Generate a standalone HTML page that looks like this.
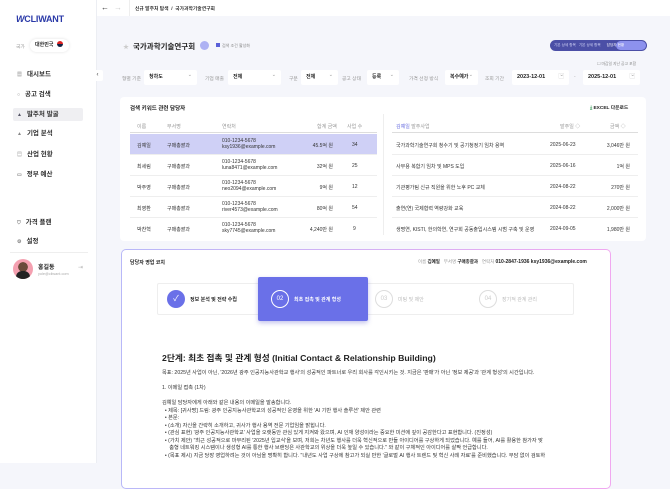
<!DOCTYPE html>
<html><head><meta charset="utf-8"><style>
*{box-sizing:border-box;margin:0;padding:0}
body{width:670px;height:463px;overflow:hidden;background:#f5f6fb;font-family:"Liberation Sans","Noto Sans CJK KR",sans-serif;color:#222;position:relative}
.abs{position:absolute}
.side{left:0;top:0;width:97px;height:463px;background:#fff;border-right:1px solid #eceef3}
.nav{left:13px;font-size:6.5px;font-weight:bold;color:#333;height:13px;width:70px;line-height:13px;padding-left:4px}
.nav i{font-style:normal;color:#888;font-size:5px;margin-right:5px}
.top{left:97px;top:0;width:573px;height:16px;background:#fff}
.lbl{font-size:4.8px;color:#999}
.sel{background:#fff;border-radius:2px;height:15px;font-size:5px;font-weight:bold;line-height:15px;padding-left:5px;color:#222}
.sel:after{content:"⌄";position:absolute;right:5px;top:-2px;color:#999;font-weight:normal}
.card{background:#fff;border-radius:4px}
.tx{font-size:5px;color:#333;white-space:nowrap}
.row{left:130px;width:247px;height:21px;border-bottom:1px solid #eee}
.rrow{left:392px;width:246px;height:21px;border-bottom:1px solid #eee}
.c{position:absolute;font-size:5px;color:#333;white-space:nowrap}
.p{font-size:5.2px;color:#333;line-height:7.5px;white-space:nowrap}
</style></head><body>
<div class="abs side"></div>
<div class="abs" style="left:16px;top:14px;font-size:9px;font-weight:bold;color:#2b3aa8;letter-spacing:-0.2px"><span style="font-style:italic;color:#2b3aa8">W</span>CLIWANT</div>
<div class="abs lbl" style="left:16px;top:43px">국가</div>
<div class="abs" style="left:30px;top:39px;width:39px;height:13px;background:#fff;border-radius:7px;box-shadow:0 0 3px rgba(0,0,0,.12);font-size:5px;font-weight:bold;line-height:13px;padding-left:5px">대한민국 <span style="display:inline-block;width:6px;height:6px;border-radius:50%;background:linear-gradient(#d22 50%,#124 50%);vertical-align:-1px;margin-left:2px"></span></div>
<div class="abs nav" style="top:68px"><i>▦</i>대시보드</div>
<div class="abs nav" style="top:88px"><i>○</i>공고 검색</div>
<div class="abs nav" style="top:108px;background:#efeff2;border-radius:2px"><i style="color:#556">▲</i>발주처 발굴</div>
<div class="abs nav" style="top:127px"><i>▲</i>기업 분석</div>
<div class="abs nav" style="top:148px"><i>▤</i>산업 현황</div>
<div class="abs nav" style="top:168px"><i>▭</i>정부 예산</div>
<div class="abs nav" style="top:216px"><i>⛉</i>가격 플랜</div>
<div class="abs nav" style="top:235px"><i>⚙</i>설정</div>
<div class="abs" style="left:10px;top:252px;width:78px;border-top:1px solid #eee"></div>
<div class="abs" style="left:13px;top:259px;width:20px;height:20px;border-radius:50%;background:radial-gradient(circle at 50% 40%,#6a4a3a 30%,#f4a0b0 32%);overflow:hidden"><div style="position:absolute;left:3px;top:12px;width:14px;height:10px;border-radius:6px 6px 0 0;background:#222"></div></div>
<div class="abs" style="left:38px;top:262px;font-size:6px;font-weight:bold">홍길동</div>
<div class="abs" style="left:38px;top:272px;font-size:3.8px;color:#aaa">yole@cliwant.com</div>
<div class="abs" style="left:78px;top:264px;font-size:6px;color:#bbb">⇥</div>
<div class="abs top"></div>
<div class="abs" style="left:101px;top:3px;font-size:8px;color:#333">←</div><div class="abs" style="left:114px;top:3px;font-size:8px;color:#ccc">→</div>
<div class="abs" style="left:129px;top:0;height:16px;border-left:1px solid #eee"></div>
<div class="abs tx" style="left:135px;top:5px;font-size:4.8px;font-weight:bold">신규 발주처 탐색 &nbsp;/&nbsp; 국가과학기술연구회</div>
<div class="abs" style="left:92px;top:70px;width:11px;height:11px;background:#fff;border-radius:2px;font-size:6px;text-align:center;line-height:11px;color:#444">‹</div>
<div class="abs" style="left:123px;top:42px;font-size:6px;color:#ccc">★</div>
<div class="abs" style="left:133px;top:41px;font-size:7.5px;font-weight:bold;white-space:nowrap">국가과학기술연구회</div>
<div class="abs" style="left:200px;top:41px;width:9px;height:9px;border-radius:50%;background:#aeb2f3"></div>
<div class="abs" style="left:216px;top:43px;font-size:4px;color:#888;white-space:nowrap"><span style="display:inline-block;width:4px;height:4px;background:#5a60d8;margin-right:2px"></span>검색 조건 활성화</div>
<div class="abs" style="left:550px;top:40px;width:97px;height:11px;border-radius:6px;background:#4b4fa6"></div>
<div class="abs" style="left:616px;top:41px;width:30px;height:9px;border-radius:5px;background:#8d92ee"></div>
<div class="abs" style="left:554px;top:43px;font-size:3.6px;color:#cfd1f5;white-space:nowrap">기본 상세 항목 &nbsp; 기본 상세 항목 &nbsp;&nbsp;&nbsp;&nbsp; <span style="color:#fff">담당자 현황</span></div>
<div class="abs" style="left:597px;top:61px;font-size:3.8px;color:#888;white-space:nowrap">☐ 마감일 지난 공고 포함</div>
<div class="abs lbl" style="left:122px;top:75px">형별 기준</div><div class="abs sel" style="left:144px;top:70px;width:53px">청하도</div>
<div class="abs lbl" style="left:205px;top:75px">기업 매출</div><div class="abs sel" style="left:228px;top:70px;width:53px">전체</div>
<div class="abs lbl" style="left:289px;top:75px">구분</div><div class="abs sel" style="left:301px;top:70px;width:37px">전체</div>
<div class="abs lbl" style="left:342px;top:75px">공고 상태</div><div class="abs sel" style="left:367px;top:70px;width:32px">등록</div>
<div class="abs lbl" style="left:409px;top:75px">가격 선정 방식</div><div class="abs sel" style="left:445px;top:70px;width:33px">복수예가</div>
<div class="abs lbl" style="left:485px;top:75px">조회 기간</div>
<div class="abs sel" style="left:512px;top:70px;width:57px;font-size:5.5px">2023-12-01<span style="position:absolute;right:5px;color:#ccc">▢</span></div>
<div class="abs lbl" style="left:574px;top:75px">-</div>
<div class="abs sel" style="left:583px;top:70px;width:57px;font-size:5.5px">2025-12-01<span style="position:absolute;right:5px;color:#ccc">▢</span></div>
<div class="abs card" style="left:120px;top:97px;width:526px;height:144px"></div>
<div class="abs" style="left:130px;top:104px;font-size:5.5px;font-weight:bold">검색 키워드 관련 담당자</div>
<div class="abs" style="left:590px;top:104px;font-size:4.8px;font-weight:bold;white-space:nowrap"><span style="color:#3a9a5a">⤓</span> EXCEL 다운로드</div>
<div class="abs" style="left:383px;top:114px;height:121px;border-left:1px solid #eee"></div>
<div class="abs" style="left:130px;top:120px;width:247px;height:13px;border-bottom:1px solid #ddd"><span class="c" style="left:7px;top:3px;color:#999">이름</span><span class="c" style="left:37px;top:3px;color:#999">부서명</span><span class="c" style="left:92px;top:3px;color:#999">연락처</span><span class="c" style="left:187px;top:3px;color:#999">합계 금액</span><span class="c" style="left:217px;top:3px;color:#999">사업 수</span></div>
<div class="abs" style="left:392px;top:120px;width:246px;height:13px;border-bottom:1px solid #ddd"><span class="c" style="left:4px;top:3px;color:#999"><span style="color:#6b70e0">김예일</span> 발주사업</span><span class="c" style="left:168px;top:3px;color:#999">발주일 ◇</span><span class="c" style="left:218px;top:3px;color:#999">금액 ◇</span></div>
<div class="abs row" style="top:134px;background:#cfd0f6"></div>
<div class="abs row" style="top:155px"></div><div class="abs row" style="top:176px"></div><div class="abs row" style="top:197px"></div><div class="abs row" style="top:218px;border:none"></div>
<div class="abs" style="left:130px;top:134px;width:247px">
<div style="position:relative;height:21px"><span class="c" style="left:7px;top:8px">김예일</span><span class="c" style="left:37px;top:8px">구매총괄과</span><span class="c" style="left:92px;top:4px;line-height:6px">010-1234-5678<br>ksy1936@example.com</span><span class="c" style="right:44px;top:8px">45.5억 원</span><span class="c" style="left:222px;top:8px">34</span></div>
<div style="position:relative;height:21px"><span class="c" style="left:7px;top:8px">최세림</span><span class="c" style="left:37px;top:8px">구매총괄과</span><span class="c" style="left:92px;top:4px;line-height:6px">010-1234-5678<br>luna8471@example.com</span><span class="c" style="right:44px;top:8px">32억 원</span><span class="c" style="left:222px;top:8px">25</span></div>
<div style="position:relative;height:21px"><span class="c" style="left:7px;top:8px">박주영</span><span class="c" style="left:37px;top:8px">구매총괄과</span><span class="c" style="left:92px;top:4px;line-height:6px">010-1234-5678<br>neo2094@example.com</span><span class="c" style="right:44px;top:8px">9억 원</span><span class="c" style="left:222px;top:8px">12</span></div>
<div style="position:relative;height:21px"><span class="c" style="left:7px;top:8px">최영환</span><span class="c" style="left:37px;top:8px">구매총괄과</span><span class="c" style="left:92px;top:4px;line-height:6px">010-1234-5678<br>river4573@example.com</span><span class="c" style="right:44px;top:8px">80억 원</span><span class="c" style="left:222px;top:8px">54</span></div>
<div style="position:relative;height:21px"><span class="c" style="left:7px;top:8px">박찬혁</span><span class="c" style="left:37px;top:8px">구매총괄과</span><span class="c" style="left:92px;top:4px;line-height:6px">010-1234-5678<br>sky7745@example.com</span><span class="c" style="right:44px;top:8px">4,240만 원</span><span class="c" style="left:223px;top:8px">9</span></div>
</div>
<div class="abs rrow" style="top:134px"></div><div class="abs rrow" style="top:155px"></div><div class="abs rrow" style="top:176px"></div><div class="abs rrow" style="top:197px"></div>
<div class="abs" style="left:392px;top:134px;width:246px">
<div style="position:relative;height:21px"><span class="c" style="left:4px;top:8px">국가과학기술연구회 청수기 및 공기청정기 임차 용역</span><span class="c" style="left:158px;top:8px">2025-06-23</span><span class="c" style="right:8px;top:8px">3,046만 원</span></div>
<div style="position:relative;height:21px"><span class="c" style="left:4px;top:8px">사무용 복합기 임차 및 MPS 도입</span><span class="c" style="left:158px;top:8px">2025-06-16</span><span class="c" style="right:8px;top:8px">1억 원</span></div>
<div style="position:relative;height:21px"><span class="c" style="left:4px;top:8px">기관평가팀 신규 직원을 위한 노후 PC 교체</span><span class="c" style="left:158px;top:8px">2024-08-22</span><span class="c" style="right:8px;top:8px">270만 원</span></div>
<div style="position:relative;height:21px"><span class="c" style="left:4px;top:8px">출연(연) 국제협력 역량강화 교육</span><span class="c" style="left:158px;top:8px">2024-08-22</span><span class="c" style="right:8px;top:8px">2,000만 원</span></div>
<div style="position:relative;height:21px"><span class="c" style="left:4px;top:8px">생명연, KISTI, 한의학연, 연구회 공동출입시스템 시범 구축 및 운영</span><span class="c" style="left:158px;top:8px">2024-09-05</span><span class="c" style="right:8px;top:8px">1,980만 원</span></div>
</div>
<div class="abs" style="left:121px;top:249px;width:490px;height:240px;border-radius:5px;background:linear-gradient(90deg,#b8b8f8,#f0a8f0);padding:1px"><div style="width:100%;height:100%;background:#fff;border-radius:4px"></div></div>
<div class="abs" style="left:130px;top:259px;font-size:5px;font-weight:bold">담당자 영업 코치</div>
<div class="abs" style="left:418px;top:259px;font-size:4.5px;color:#999;white-space:nowrap">이름 <b style="color:#222">김예일</b> &nbsp; 부서명 <b style="color:#222">구매총괄과</b> &nbsp; 연락처 <b style="color:#222;font-size:5px">010-2847-1936 ksy1936@example.com</b></div>
<div class="abs" style="left:157px;top:283px;width:417px;height:32px;border:1px solid #eee;border-radius:2px;background:#fff"></div>
<div class="abs" style="left:167px;top:290px;width:18px;height:18px;border-radius:50%;background:#6a70e8;color:#fff;font-size:8px;text-align:center;line-height:18px">✓</div>
<div class="abs" style="left:190px;top:296px;font-size:5px;font-weight:bold;white-space:nowrap">정보 분석 및 전략 수립</div>
<div class="abs" style="left:258px;top:277px;width:110px;height:44px;background:#6a70e8;border-radius:2px;box-shadow:0 2px 5px rgba(80,80,200,.35)"></div>
<div class="abs" style="left:271px;top:290px;width:18px;height:18px;border-radius:50%;border:1px solid #fff;color:#fff;font-size:6px;text-align:center;line-height:16px">02</div>
<div class="abs" style="left:294px;top:296px;font-size:5px;color:#fff;font-weight:bold;white-space:nowrap">최초 접촉 및 관계 형성</div>
<div class="abs" style="left:375px;top:290px;width:18px;height:18px;border-radius:50%;border:1px solid #ddd;color:#ccc;font-size:6px;text-align:center;line-height:16px">03</div>
<div class="abs" style="left:398px;top:296px;font-size:5px;color:#bbb">미팅 및 제안</div>
<div class="abs" style="left:479px;top:290px;width:18px;height:18px;border-radius:50%;border:1px solid #ddd;color:#ccc;font-size:6px;text-align:center;line-height:16px">04</div>
<div class="abs" style="left:502px;top:296px;font-size:5px;color:#bbb;white-space:nowrap">장기적 관계 관리</div>
<div class="abs" style="left:162px;top:351px;font-size:8.7px;font-weight:bold;white-space:nowrap">2단계: 최초 접촉 및 관계 형성 (Initial Contact &amp; Relationship Building)</div>
<div class="abs p" style="left:162px;top:370px">목표: 2025년 사업이 아닌, '2026년 광주 인공지능사관학교 행사'의 성공적인 파트너로 우리 회사를 각인시키는 것. 지금은 '판매'가 아닌 '정보 제공'과 '관계 형성'의 시간입니다.</div>
<div class="abs p" style="left:162px;top:385px">1. 이메일 접촉 (1차)</div>
<div class="abs p" style="left:162px;top:400px">김예일 담당자에게 아래와 같은 내용의 이메일을 발송합니다.<br>
&nbsp;&nbsp;• 제목: [귀사명] 드림: 광주 인공지능사관학교의 성공적인 운영을 위한 'AI 기반 행사 솔루션' 제안 관련<br>
&nbsp;&nbsp;• 본문:<br>
&nbsp;&nbsp;• (소개) 자신을 간략히 소개하고, 귀사가 행사 용역 전문 기업임을 밝힙니다.<br>
&nbsp;&nbsp;• (관심 표현) '광주 인공지능사관학교' 사업을 오랫동안 관심 있게 지켜봐 왔으며, AI 인재 양성이라는 중요한 미션에 깊이 공감한다고 표현합니다. (진정성)<br>
&nbsp;&nbsp;• (가치 제안) "최근 성공적으로 마무리된 '2025년 입교식'을 보며, 저희는 차년도 행사를 더욱 혁신적으로 만들 아이디어를 구상하게 되었습니다. 예를 들어, AI를 활용한 참가자 맞<br>
&nbsp;&nbsp;&nbsp;&nbsp;&nbsp;춤형 네트워킹 시스템이나 생성형 AI를 통한 행사 브랜딩은 사관학교의 위상을 더욱 높일 수 있습니다." 와 같이 구체적인 아이디어를 살짝 언급합니다.<br>
&nbsp;&nbsp;• (목표 제시) 지금 당장 영업하려는 것이 아님을 명확히 합니다. "내년도 사업 구상에 참고가 되실 만한 '글로벌 AI 행사 트렌드 및 혁신 사례 자료'를 준비했습니다. 부담 없이 검토하</div>
</body></html>
